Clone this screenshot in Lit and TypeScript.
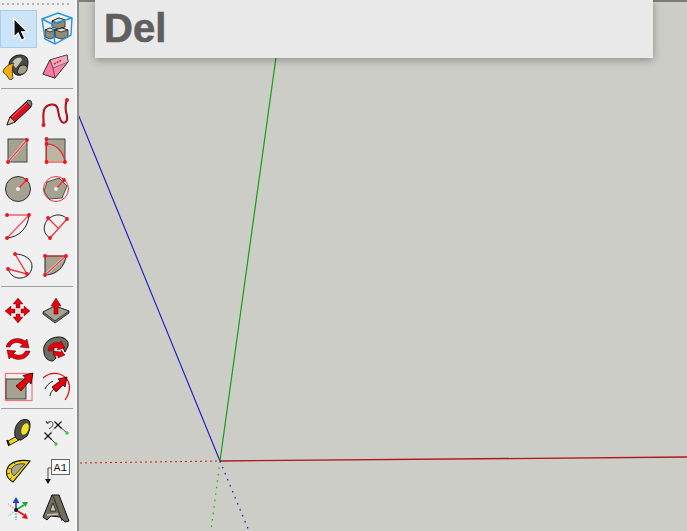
import { LitElement, html, css, svg } from "lit";
import { customElement } from "lit/decorators.js";

const T = "#a5a38f";
const dot = (x: number, y: number, r = 1.9, c = "#ee1122") => svg`<circle cx=${x} cy=${y} r=${r} fill=${c}/>`;
const ln = (d: string, c = "#f2303c", w = 1.2) => svg`<path d=${d} fill="none" stroke=${c} stroke-width=${w}/>`;
const FREE = "M6.5 31C7 26 5 18 8 14 11 10 18 9 20 13 22 17 21 24 25 28 28 30 31 27 30 22 29 17 27 13 30 6";

const icons: Record<string, unknown> = {
  select: svg`<path d="M14 8.5v18.5l4.2-4 3.2 7 3.4-1.4-3.2-6.8h5.8z" fill="#111" stroke="#fff" stroke-width="1.1"/>`,
  component: svg`<g stroke="#222" stroke-width=".8">
      <path d="M15 11l7-3 6 2v7l-7 2-6-2z" fill="#8e8c78"/><path d="M15 11l6 2 7-3-6-2z" fill="#dcdac8"/>
      <path d="M8 20l5-2 5 2v7l-5 2-5-2z" fill="#8e8c78"/><path d="M8 20l5 2 5-2-5-2z" fill="#dcdac8"/>
      <path d="M18 20l7-2 6 2v7l-7 2-6-2z" fill="#8e8c78"/><path d="M18 20l6 2 7-2-6-2z" fill="#dcdac8"/></g>
    <g stroke="#2196e0" stroke-width="1.4" fill="none"><path d="M5 9 21 3l14 5-1 17-16 9-10-5z"/><path d="M5 9l10 5 20-6M15 14l3 20"/></g>`,
  paint: svg`<path d="M9 17c0-6 5-10 11-10 5 0 8 3 8 7 0 6-3 11-7 13-4 1-7-1-8-4z" fill="#4c4a40" stroke="#111" stroke-width="1"/>
    <path d="M12 16c1-4 5-7 9-6l1 2-6 8z" fill="#c5c6bc"/><path d="M19 19c3-3 7-2 8 0s-1 6-4 7-5 0-6-2z" fill="#a39f86" stroke="#111" stroke-width=".9"/>
    <path d="M3 24c0-3 5-8 11-9-2 3-2 10-1 15-1 2-3 2-4 1-1-2-3-5-6-7z" fill="#f4ae12" stroke="#111" stroke-width=".7"/>`,
  eraser: svg`<path d="M6 26l7-14 17-5 1 7-13 16z" fill="#f887a4" stroke="#222" stroke-width="1"/><path d="M13 12l17-5 1 7-15 6z" fill="#fba6bc" stroke="#444" stroke-width=".6"/><path d="M6 26l7-14 3 8 2 10z" fill="#ff7aa0" stroke="#222" stroke-width=".6"/><path d="M17 16l8-4" stroke="#a33" stroke-width="1.6" stroke-dasharray="2 1"/>`,
  pencil: svg`<path d="M7 31l3-8L26 8l5 5-16 15z" fill="#d81020" stroke="#111" stroke-width="1"/><path d="M26 8l2-2 3 1 1 3-1 3z" fill="#777" stroke="#111" stroke-width=".8"/><path d="M7 31l3-8 5 5z" fill="#d5c49a" stroke="#111" stroke-width=".7"/><path d="M12 23 27 9" stroke="#f88" stroke-width=".8"/>`,
  free: svg`${ln(FREE, "#8a0412", 2)}${ln(FREE, "#e81024", 1)}${dot(6.5, 31, 2)}${dot(30, 6, 2)}`,
  rect: svg`<rect x="8" y="7" width="19" height="23" fill=${T} stroke="#444" stroke-width="1"/>${ln("M8 30 27 8", "#fff", 2)}${ln("M8 30 27 8", "#f2303c")}${dot(8, 30)}${dot(27, 8)}`,
  rotrect: svg`<path d="M9 7h19v23H9z" fill=${T} stroke="#444"/><path d="M9.5 30V12c10 0 17 8 18.5 18z" fill="#b9b7a4" stroke="#ee2030" stroke-width="1.1"/><path d="M9.5 30H28" stroke="#f88" stroke-width="1.6"/><path d="M9.5 7v5" stroke="#ee2030" stroke-width="1.1"/>${dot(9.5, 7)}${dot(9.5, 12)}${dot(9.5, 30)}${dot(28, 30)}`,
  circle: svg`<circle cx="18" cy="19" r="12.5" fill=${T} stroke="#333" stroke-width="1"/><path d="M18 19 26.5 10" stroke="#f2303c" stroke-width="1.4"/>${dot(18, 19, 2.1, "#eee")}${dot(26.5, 10)}`,
  polygon: svg`<circle cx="19" cy="19" r="12.5" fill="none" stroke="#f2303c" stroke-width="1"/><path d="M10 12 22 8l8 8-5 12-13 1-5-8z" fill=${T} stroke="#333" stroke-width=".8"/><path d="M19 19l8-9" stroke="#f2303c" stroke-width="1.2"/>${dot(19, 19, 2, "#eee")}${dot(27, 10)}`,
  arc1: svg`${ln("M7 7H29", "#f7808a", 2)}${ln("M7 30 29 7", "#f2505c", 1.2)}<path d="M7 30C19 29 28 20 29 7" fill="none" stroke="#222" stroke-width="1"/>${dot(7, 7)}${dot(29, 7)}${dot(7, 30)}`,
  arc2: svg`<path d="M13 30C8 27 6 22 8 16 11 8 23 3 30 11" fill="none" stroke="#222" stroke-width="1"/>${ln("M13 30 30 11M11 10 21 20", "#f2303c", 1.3)}${dot(13, 30)}${dot(11, 10)}${dot(30, 11)}`,
  arc3: svg`<path d="M15 8C24 8 32 13 32 20 32 27 26 33 18 32 13 31 10 28 8 23" fill="none" stroke="#222" stroke-width="1"/>${ln("M15 8 27 28 8 23", "#f2303c", 1.3)}${dot(15, 8)}${dot(8, 23)}${dot(27, 28)}`,
  pie: svg`<path d="M8 10H29C28 20 20 29 8 29z" fill=${T} stroke="#222" stroke-width="1"/>${ln("M8 29 29 10", "#fff", 2.2)}${ln("M8 29 29 10M8 10H29", "#f2303c", 1.2)}${dot(8, 10)}${dot(29, 10)}${dot(8, 29)}`,
  move: svg`<g fill="#e8000c" stroke="#500" stroke-width=".4">
    <path d="M18 6l5 6h-3v4h-4v-4h-3z"/><path d="M18 31l5-6h-3v-3h-4v3h-3z"/><path d="M5 19l6-5v3h4v4h-4v3z"/><path d="M30 19l-6-5v3h-3v4h3v3z"/></g><circle cx="18" cy="19" r="2" fill="#ddd"/>`,
  push: svg`<path d="M6 20 18 14l14 5v2l-14 10-12-9z" fill="#7f7d6a" stroke="#222" stroke-width=".9"/><path d="M6 20l12 9 14-10-14-5z" fill=${T} stroke="#222" stroke-width=".8"/><path d="M19 6l5 8h-3v8h-4v-8h-3z" fill="#e8000c" stroke="#400" stroke-width=".5"/>`,
  rotate: svg`<path d="M6 17C8 9 18 6 25 11l2-2 2 9-9-1 2.5-2.5C18 11 12 12 10 17z" fill="#e8000c" stroke="#400" stroke-width=".5"/><path d="M30 21C28 29 18 32 11 27l-2 2-2-9 9 1-2.5 2.5c4 3 10 2 12-2.5z" fill="#e8000c" stroke="#400" stroke-width=".5"/>`,
  follow: svg`<path d="M7 23C5 13 13 7 22 7c6 0 10 4 9 9l-3 6-3-7c-3-1-7 0-8 3-1 4 0 7 2 10l-3 3C11 31 8 28 7 23z" fill="#6f6e62" stroke="#111" stroke-width="1"/><path d="M11 21c0-6 6-10 12-8l1-2 4 7-8 2 1-2c-3-1-6 0-6 3z" fill="#e8000c" stroke="#400" stroke-width=".4"/><path d="M17 21l7 1v-2l4 5-7 3v-2l-5-1z" fill="#e8000c" stroke="#400" stroke-width=".4"/>`,
  scale: svg`<rect x="5.5" y="5.5" width="26.5" height="27" fill="none" stroke="#f67080" stroke-width="1.2"/><rect x="6" y="11" width="20" height="20" fill=${T} stroke="#333" stroke-width=".9"/><path d="M33 5 23 7.5l2.5 2.5L16 18l5 5 8-9.5 2 2.5z" fill="#e8000c" stroke="#200" stroke-width=".8"/>`,
  offset: svg`<path d="M6 10c8-7 20-6 25 3 3 6 1 14-3 19" fill="none" stroke="#e8000c" stroke-width="1.2"/><path d="M8 21c1-3 4-6 8-8M13 28c0-3 2-5 4-7" fill="none" stroke="#222" stroke-width="1"/><path d="M30 9 21 11l2 2-8 6 4 5 7-7 2 2z" fill="#e8000c" stroke="#200" stroke-width=".8"/>`,
  tape: svg`<path d="M8 28l9-5 2 4-9 5z" fill="#f0d818" stroke="#111" stroke-width=".9"/><path d="M7 27l2 6" stroke="#111" stroke-width="1.6"/><path d="M15 23c-1-6 1-12 5-15 3-2 8-2 9 0 2 2 1 10-2 15l-6 4c-3 0-5-1-6-4z" fill="#4e4e4a" stroke="#111"/><ellipse cx="25" cy="16" rx="3.8" ry="6.5" transform="rotate(22 25 16)" fill="#efe228" stroke="#333" stroke-width=".7"/>`,
  dim: svg`<path d="M21 12 30 20M11 23 19 31" stroke="#333" stroke-width=".9"/><path d="M17.5 8.5l7 7M24.5 8.5l-7 7M7.5 19.5l7 7M14.5 19.5l-7 7" stroke="#111" stroke-width="1.2"/><path d="M20 12 12 22" stroke="#555" stroke-width=".7" stroke-dasharray="1.2 1.2"/><path d="M10 10c2-2 6-2 6 1s-3 4-4 5M9 8l1 2.5 2.5-1" fill="none" stroke="#333" stroke-width=".9"/>${dot(30, 20, 1.7, "#33cc44")}${dot(19, 31, 1.7, "#33cc44")}`,
  protractor: svg`<path d="M30 10C20 8 11 11 8 16c-3 5-2 11 5 15z" fill="#f0d818" stroke="#111" stroke-width="1.1"/><path d="M25 13C19 12 14 14 12 17c-1 3-1 5 2 8z" fill="#a8a692" stroke="#222" stroke-width=".8"/><path d="M8 17l3 1M7 23l3-1M10 28l2-2M14 11l1 2M20 9v2" stroke="#222" stroke-width=".7"/>`,
  text: svg`<rect x="14.5" y="8.5" width="18" height="15" fill="#f8f8f8" stroke="#666" stroke-width="1"/><text x="16.8" y="20" class="a1">A1</text><path d="M14.5 17h-3.5v13" fill="none" stroke="#444"/><path d="M8 28h6l-3 5z" fill="#111"/>`,
  axes: svg`<path d="M16 21V12" stroke="#1446c8" stroke-width="1.6"/><path d="M12.5 14l3.5-6 3.5 6z" fill="#1446c8"/><path d="M16 21v10" stroke="#7b9be8" stroke-dasharray="2 1" stroke-width="1.4"/>
    <path d="M16 21 24 26" stroke="#e01018" stroke-width="1.8"/><path d="M22 29l6 1-2.5-6z" fill="#e01018"/><path d="M16 21 8 15" stroke="#f09090" stroke-width="1.2" stroke-dasharray="2 1"/>
    <path d="M16 21 24 16" stroke="#18a838" stroke-width="1.8"/><path d="M22 13l6 0-2.5 5z" fill="#18a838"/><path d="M16 21 8 27" stroke="#90d8a0" stroke-width="1.2" stroke-dasharray="2 1"/><circle cx="16" cy="21" r="1.9" fill="#111"/>`,
  threed: svg`<path d="M6 28 15 6h7l10 26-4 1-5-5-9-1-4 4z" fill="#6f6e5e" stroke="#111" stroke-width="1"/><path d="M15 6l2 3 8 23" fill="none" stroke="#222" stroke-width=".9"/><path d="M16 14l-3 8h6z" fill="#ccc9b6" stroke="#111" stroke-width=".7"/><path d="M10 26l11-1" stroke="#ccc9b6" stroke-width="1.5"/>`,
};

const groups = [
  ["select", "component", "paint", "eraser"],
  ["pencil", "free", "rect", "rotrect", "circle", "polygon", "arc1", "arc2", "arc3", "pie"],
  ["move", "push", "rotate", "follow", "scale", "offset"],
  ["tape", "dim", "protractor", "text", "axes", "threed"],
];

@customElement("app-root")
export class AppRoot extends LitElement {
  static styles = css`
    :host { display: flex; width: 687px; height: 531px; overflow: hidden; background: #cdcdc8; }
    .bar { width: 75px; flex: none; background: #f0f0f0; display: flex; flex-direction: column; padding-top: 3px; box-sizing: border-box; }
    .grip { height: 2px; margin: 0 3px 5px 2px; background-image: linear-gradient(90deg, #b4b4b4 2px, transparent 2px); background-size: 5px 2px; }
    .group { display: grid; grid-template-columns: 37px 37px; grid-auto-rows: 38px; }
    .sep { height: 1px; background: #a0a0a0; margin: 2px 2px 5px 1px; }
    .sep.last { margin-bottom: 4px; }
    .cell { width: 37px; height: 38px; box-sizing: border-box; }
    .cell.on { background: #cce4f7; box-shadow: inset 0 0 0 1px #a4cdf0; }
    .cell svg { display: block; width: 38px; height: 38px; overflow: visible; }
    .a1 { font: 11px "Liberation Mono", monospace; fill: #111; }
    .gap { width: 2px; background: #f6f6f6; flex: none; }
    .div { width: 2px; background: #8f8f8f; flex: none; }
    .canvas { flex: 1; position: relative; background: #cdcdc8; border-top: 2px solid #7d7d7b; box-sizing: border-box; }
    .axes { position: absolute; left: 0; top: -2px; width: 608px; height: 531px; }
    .panel { position: absolute; left: 16px; top: -2px; width: 558px; height: 58px; background: #e9e9e9; box-shadow: 0 2px 8px rgba(0, 0, 0, .32); box-sizing: border-box; padding: 5px 0 0 9px; font: bold 40px/46px "Liberation Sans", sans-serif; color: #5f5f5f; -webkit-text-stroke: .6px #5f5f5f; }
  `;

  render() {
    return html`
      <div class="bar">
        <div class="grip"></div>
        ${groups.map((g, i) => html`
          <div class="group">
            ${g.map((n) => html`<div class="cell ${n === "select" ? "on" : ""}"><svg viewBox="0 0 38 38">${icons[n]}</svg></div>`)}
          </div>
          ${i < 3 ? html`<div class="sep ${i === 2 ? "last" : ""}"></div>` : ""}
        `)}
      </div>
      <div class="gap"></div>
      <div class="div"></div>
      <div class="canvas">
        <svg class="axes" viewBox="79 0 608 531">
          <path d="M78 114 220 461" stroke="#1a1ac0" stroke-width="1.1"/>
          <path d="M277 50 220 461" stroke="#12a012" stroke-width="1.2"/>
          <path d="M220 461 687 457" stroke="#b01818" stroke-width="1.3"/>
          <path d="M80 463 220 461" stroke="#c81818" stroke-width="1" stroke-dasharray="2 3"/>
          <path d="M220 461 211 531" stroke="#18b018" stroke-width="1.2" stroke-dasharray="1.5 5"/>
          <path d="M220 461 249 531" stroke="#1818c0" stroke-width="1.2" stroke-dasharray="1.5 5"/>
        </svg>
        <div class="panel">Del</div>
      </div>
    `;
  }
}
